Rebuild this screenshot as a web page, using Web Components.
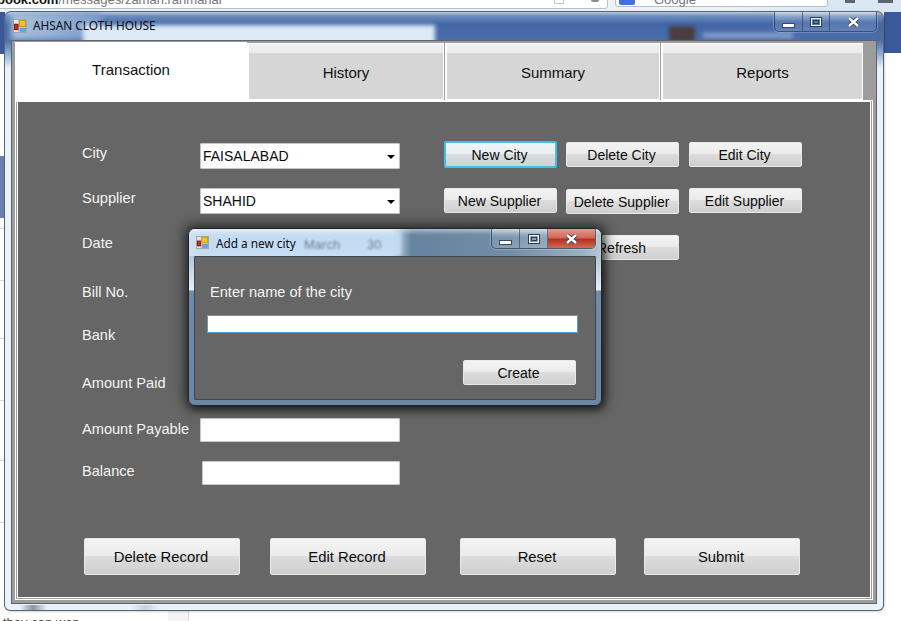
<!DOCTYPE html>
<html>
<head>
<meta charset="utf-8">
<title>AHSAN CLOTH HOUSE</title>
<style>
    html, body { margin: 0; height: 100%; overflow: hidden; background: #fff; }
    body { font-family: "Liberation Sans", Arial, sans-serif; }
    .big { width: 156px; height: 37px; font-size: 14.8px; }
</style>
</head>
<body>

<browser-backdrop></browser-backdrop>

<app-window caption="AHSAN CLOTH HOUSE">
    <tab-strip>
        <tab-item selected style="width:232px">Transaction</tab-item>
        <tab-item style="width:196px;margin-left:1px">History</tab-item>
        <tab-item style="width:214px">Summary</tab-item>
        <tab-item style="width:201px">Reports</tab-item>
    </tab-strip>
    <tab-page>
        <form-grid>
            <field-label style="margin-top:4px">City</field-label>
            <combo-box style="margin-top:2px">FAISALABAD</combo-box>
            <win-button focused style="height:27px">New City</win-button>
            <win-button style="margin-top:1px">Delete City</win-button>
            <win-button style="margin-top:1px">Edit City</win-button>

            <field-label style="margin-top:2px">Supplier</field-label>
            <combo-box>SHAHID</combo-box>
            <win-button>New Supplier</win-button>
            <win-button style="margin-top:1px">Delete Supplier</win-button>
            <win-button>Edit Supplier</win-button>

            <field-label>Date</field-label>
            <text-field></text-field>
            <win-button style="grid-column:4">Refresh</win-button>

            <field-label>Bill No.</field-label>
            <text-field></text-field>

            <field-label>Bank</field-label>
            <text-field></text-field>

            <field-label>Amount Paid</field-label>
            <text-field></text-field>

            <field-label style="margin-top:3px">Amount Payable</field-label>
            <text-field></text-field>

            <field-label style="margin-top:2px">Balance</field-label>
            <text-field style="margin-left:2px;width:198px"></text-field>

            <button-row>
                <win-button class="big">Delete Record</win-button>
                <win-button class="big" style="margin-left:30px">Edit Record</win-button>
                <win-button class="big" style="margin-left:34px">Reset</win-button>
                <win-button class="big" style="margin-left:28px">Submit</win-button>
            </button-row>
        </form-grid>
    </tab-page>
</app-window>

<city-dialog caption="Add a new city">
    <field-label>Enter name of the city</field-label>
    <text-field focused style="width:371px;height:18px;margin:15px 0 0 -3px"></text-field>
    <win-button style="margin:27px 0 0 253px">Create</win-button>
</city-dialog>

<script>
const appIcon = `
    <svg width="14" height="14" viewBox="0 0 14 14">
        <rect x="0.5" y="0.5" width="13" height="13" fill="#e3e6ea" stroke="#a2a2a2"/>
        <path d="M5.5 1V13M1 4.5H6M1 11H13" stroke="#bdbdbd"/>
        <rect x="6.5" y="1.5" width="6" height="6" fill="#f6c51d" stroke="#c9971a"/>
        <rect x="1.5" y="5.5" width="3.5" height="5" fill="#d3261c" stroke="#8f1a14"/>
        <rect x="7" y="9" width="5.5" height="3.5" fill="#6ea4e6" stroke="#4d82c8" stroke-width="0.6"/>
    </svg>`;

function capGlyph(kind){
    if(kind == "min") return `<svg width="13" height="5" viewBox="0 0 13 5"><rect x="0.5" y="0.5" width="12" height="4" fill="#fff" stroke="#3b4a60"/></svg>`;
    if(kind == "max") return `<svg width="12" height="10" viewBox="0 0 12 10"><rect x="1" y="1" width="10" height="8" fill="none" stroke="#2e3c52" stroke-width="2"/><rect x="1.5" y="1.5" width="9" height="7" fill="none" stroke="#f4f6f9"/><rect x="3.5" y="3.5" width="5" height="3" fill="none" stroke="#2e3c52"/></svg>`;
    return `<svg width="13" height="10" viewBox="0 0 13 10"><path d="M2 1 L11 9 M11 1 L2 9" stroke="#2e3c52" stroke-width="4"/><path d="M2 1 L11 9 M11 1 L2 9" stroke="#fff" stroke-width="2.4"/></svg>`;
}

class BrowserBackdrop extends HTMLElement{
    constructor(){
        super();
        this.attachShadow({mode: "open"});
        this.shadowRoot.innerHTML = `
            <style>
                :host { position: absolute; inset: 0; overflow: hidden; background: #fff; font-size: 13px; color: #333; }
                div { position: absolute; }
                .chrome { left: 0; right: 0; top: 0; height: 12px; background: linear-gradient(90deg, #eef3f8 0, #eef3f8 80%, #d9e7f4 92%); }
                .url { left: -4px; top: -7px; width: 610px; height: 14px; background: #fff; border: 1px solid #b5c0cc; border-radius: 3px; white-space: nowrap; line-height: 12px; color: #777; }
                .url b { color: #111; }
                .search { left: 615px; top: -7px; width: 213px; height: 14px; background: #fff; border: 1px solid #b5c0cc; border-radius: 3px; line-height: 12px; padding-left: 38px; box-sizing: border-box; color: #777; }
                .gbox { left: 619px; top: 0; width: 16px; height: 5px; background: #3f6fe0; border-radius: 0 0 2px 2px; }
                .star { left: 554px; top: 0; width: 10px; height: 4px; border: 1px solid #c8c8c8; border-top: 0; box-sizing: border-box; }
                .dot { left: 591px; top: 0; width: 8px; height: 2px; background: #8e8e8e; border-radius: 0 0 4px 4px; }
                .ic { top: 0; height: 3px; background: #5c6470; }
                .fb { left: 884px; right: 0; top: 12px; height: 41px; background: #3b5998; }
                .fbl { left: 0; width: 5px; top: 12px; height: 42px; background: #3b5998; }
                .side { left: 0; width: 5px; top: 156px; height: 62px; background: #6b7fae; }
                .line { left: 0; width: 5px; height: 1px; background: #d8d8d8; }
                .foot { left: 3px; top: 615px; font-size: 13px; white-space: nowrap; line-height: 15px; color: #444; }
                .fcol { left: 168px; width: 20px; top: 611px; height: 10px; background: #f3f3f3; border-right: 1px solid #dcdcdc; }
            </style>
            <div class="chrome"></div>
            <div class="url"><b>book.com</b>/messages/zaman.rahmanal</div>
            <div class="search">Google</div>
            <div class="gbox"></div>
            <div class="star"></div>
            <div class="dot"></div>
            <div class="ic" style="left:845px;width:10px"></div>
            <div class="ic" style="left:878px;width:15px"></div>
            <div class="fb"></div>
            <div class="fbl"></div>
            <div class="side"></div>
            <div class="line" style="top:228px"></div>
            <div class="line" style="top:280px"></div>
            <div class="line" style="top:338px"></div>
            <div class="line" style="top:400px"></div>
            <div class="line" style="top:460px"></div>
            <div class="line" style="top:522px"></div>
            <div class="foot">they can wan</div>
            <div class="fcol"></div>
        `;
    }
}
customElements.define("browser-backdrop", BrowserBackdrop);

class CaptionControls extends HTMLElement{
    constructor(){
        super();
        this.attachShadow({mode: "open"});
        const w = (this.getAttribute("widths") || "28,27,46").split(",");
        this.shadowRoot.innerHTML = `
            <style>
                :host { display: flex; margin-left: auto; height: 19px; border: 1px solid rgba(40,55,80,.75); border-top: 0; border-radius: 0 0 5px 5px; box-shadow: 0 0 0 1px rgba(255,255,255,.22); overflow: hidden; background: linear-gradient(rgba(255,255,255,.34), rgba(255,255,255,.08) 50%, rgba(255,255,255,.16)); }
                span { display: flex; align-items: center; justify-content: center; box-sizing: border-box; border-right: 1px solid rgba(40,55,80,.55); }
                span:last-child { border-right: 0; }
                .min svg { margin-top: 8px; }
                :host([danger]) .cls { background: linear-gradient(#e39a8e, #d0695b 45%, #b5321f 55%, #cf6a55); }
            </style>
            <span class="min" style="width:${w[0]}px">${capGlyph("min")}</span>
            <span style="width:${w[1]}px">${capGlyph("max")}</span>
            <span class="cls" style="width:${w[2]}px">${capGlyph("x")}</span>
        `;
    }
}
customElements.define("caption-controls", CaptionControls);

class AppWindow extends HTMLElement{
    constructor(){
        super();
        this.attachShadow({mode: "open"});
        this.shadowRoot.innerHTML = `
            <style>
                :host { position: absolute; left: 5px; top: 12px; width: 878px; height: 598px; box-sizing: border-box; padding: 0 6px 6px; display: flex; flex-direction: column; border-radius: 6px 6px 5px 5px;
                    background:
                        linear-gradient(90deg, transparent 15px, #8b95a2 28px, transparent 42px, transparent 125px, #c9d2dc 140px, transparent 155px) 0 100% / 100% 5px no-repeat,
                        linear-gradient(#4a6dab 28px, #8fb0d6 42px, rgba(255,255,255,0) 56px),
                        #e9f1f9;
                    box-shadow: 0 0 0 1px #5d6470, 1px 1px 3px rgba(0,0,0,.35); }
                .bar { position: relative; height: 28px; margin: 0 -6px; padding-right: 6px; display: flex; align-items: flex-start; overflow: hidden; border-radius: 6px 6px 0 0; font: 11.8px "Noto Sans", sans-serif; color: #0b0b0b; background: linear-gradient(#b9cbe0 0, #6d8dbc 4px, #4468a7 12px, #4a6dab 100%); }
                .pale { position: absolute; left: 78px; top: 13px; width: 352px; height: 24px; background: #dce9f6; filter: blur(2px); }
                .palel { position: absolute; left: 6px; top: 0; width: 90px; height: 28px; background: linear-gradient(90deg, #a9c2de, #7d9ccb); filter: blur(3px); }
                .smudge { position: absolute; left: 664px; top: 14px; width: 26px; height: 16px; background: #4a3d40; filter: blur(2px); }
                .smudge2 { position: absolute; left: 698px; top: 21px; width: 90px; height: 5px; background: #8aa4cf; filter: blur(2px); }
                svg.ico { position: relative; margin: 7px 0 0 8px; }
                .t { position: relative; margin: 5px 0 0 6px; white-space: nowrap; }
                .client { flex: 1; display: flex; flex-direction: column; box-sizing: border-box; border: 1px solid #5d6470; background: #9c9c9c; padding: 1px 3px 3px 3px; min-height: 0; }
            </style>
            <div class="bar">
                <div class="palel"></div><div class="pale"></div><div class="smudge"></div><div class="smudge2"></div>
                ${appIcon.replace("<svg", '<svg class="ico"')}
                <span class="t">${this.getAttribute("caption")}</span>
                <caption-controls style="position:relative"></caption-controls>
            </div>
            <div class="client"><slot></slot></div>
        `;
    }
}
customElements.define("app-window", AppWindow);

class TabStrip extends HTMLElement{
    constructor(){
        super();
        this.attachShadow({mode: "open"});
        this.shadowRoot.innerHTML = `
            <style>
                :host { display: flex; height: 58px; align-items: flex-end; position: relative; z-index: 1; }
            </style>
            <slot></slot>
        `;
    }
}
customElements.define("tab-strip", TabStrip);

class TabItem extends HTMLElement{
    constructor(){
        super();
        this.attachShadow({mode: "open"});
        this.shadowRoot.innerHTML = `
            <style>
                :host { display: flex; box-sizing: border-box; height: 57px; margin-left: 2px; align-items: center; justify-content: center; font-size: 15px; color: #111; background: linear-gradient(#f1f1f1, #ececec 10px, #d6d6d6 10px); box-shadow: 0 0 0 1px #fff inset, -1px 0 0 #fff; padding-top: 1px; }
                :host([selected]) { height: 60px; margin: 0 0 -2px; background: #fff; box-shadow: none; padding: 0 0 5px; }
            </style>
            <slot></slot>
        `;
    }
}
customElements.define("tab-item", TabItem);

class TabPage extends HTMLElement{
    constructor(){
        super();
        this.attachShadow({mode: "open"});
        this.shadowRoot.innerHTML = `
            <style>
                :host { display: block; flex: 1; width: 858px; box-sizing: border-box; border: 3px double #fff; border-top: 2px solid #fff; background: #666; background-clip: padding-box; }
            </style>
            <slot></slot>
        `;
    }
}
customElements.define("tab-page", TabPage);

class FormGrid extends HTMLElement{
    constructor(){
        super();
        this.attachShadow({mode: "open"});
        this.shadowRoot.innerHTML = `
            <style>
                :host { display: grid; padding: 39px 0 0 64px; grid-template-columns: 118px 244px 122px 123px 113px; grid-template-rows: 47px 47px 49px 43px 48px 43px 43px 77px auto; align-items: start; }
            </style>
            <slot></slot>
        `;
    }
}
customElements.define("form-grid", FormGrid);

class ButtonRow extends HTMLElement{
    constructor(){
        super();
        this.attachShadow({mode: "open"});
        this.shadowRoot.innerHTML = `
            <style>
                :host { display: flex; grid-column: 1 / -1; margin-left: 2px; }
            </style>
            <slot></slot>
        `;
    }
}
customElements.define("button-row", ButtonRow);

class FieldLabel extends HTMLElement{
    constructor(){
        super();
        this.attachShadow({mode: "open"});
        this.shadowRoot.innerHTML = `
            <style>
                :host { display: block; grid-column: 1; font-size: 14.6px; line-height: 16px; color: #f4f4f4; white-space: nowrap; }
            </style>
            <slot></slot>
        `;
    }
}
customElements.define("field-label", FieldLabel);

class ComboBox extends HTMLElement{
    constructor(){
        super();
        this.attachShadow({mode: "open"});
        this.shadowRoot.innerHTML = `
            <style>
                :host { display: flex; align-items: center; box-sizing: border-box; width: 200px; height: 26px; padding: 0 5px 0 3px; font-size: 14px; color: #0c0c0c; background: #fff; border-radius: 2px; box-shadow: 0 0 0 1px #c4c4c4 inset; }
                i { margin-left: auto; width: 0; height: 0; border: 4px solid transparent; border-top-color: #000; border-bottom: 0; margin-top: 1px; }
            </style>
            <slot></slot><i></i>
        `;
    }
}
customElements.define("combo-box", ComboBox);

class TextField extends HTMLElement{
    constructor(){
        super();
        this.attachShadow({mode: "open"});
        this.shadowRoot.innerHTML = `
            <style>
                :host { display: block; box-sizing: border-box; width: 200px; height: 24px; background: #fff; border-radius: 2px; box-shadow: 0 0 0 1px #c8c8c8 inset; }
                :host([focused]) { box-shadow: 0 0 0 1px #5f9ac9 inset; border-radius: 1px; }
            </style>
        `;
    }
}
customElements.define("text-field", TextField);

class WinButton extends HTMLElement{
    constructor(){
        super();
        this.attachShadow({mode: "open"});
        this.shadowRoot.innerHTML = `
            <style>
                :host { display: flex; align-items: center; justify-content: center; box-sizing: border-box; width: 113px; height: 25px; padding-right: 2px; font-size: 14px; color: #0c0c0c; border: 1px solid #e9e9e9; border-radius: 2px; background: linear-gradient(#f3f3f3, #ebebeb 48%, #dcdcdc 50%, #cfcfcf); white-space: nowrap; }
                :host([focused]) { border: 2px solid #3fc0e6; background: linear-gradient(#f1f6f9, #e8eef1 48%, #d9dee1 50%, #ccd2d5); }
            </style>
            <slot></slot>
        `;
    }
}
customElements.define("win-button", WinButton);

class CityDialog extends HTMLElement{
    constructor(){
        super();
        this.attachShadow({mode: "open"});
        this.shadowRoot.innerHTML = `
            <style>
                :host { position: absolute; left: 188px; top: 228px; width: 414px; height: 178px; box-sizing: border-box; padding: 0 5px 5px; display: flex; flex-direction: column; border-radius: 7px; border: 1px solid #20262e; background: linear-gradient(#b3c7d8 0, #b3c7d8 28px, #e9eff4 61px, #6f8ba8 62px, #6a87a4 100%); box-shadow: 0 0 12px 4px rgba(0,0,0,.55), 2px 3px 6px rgba(0,0,0,.4); }
                .bar { position: relative; height: 27px; margin: 0 -5px; padding-right: 5px; display: flex; align-items: flex-start; overflow: hidden; border-radius: 6px 6px 0 0; font: 11.8px "Noto Sans", sans-serif; color: #0b0b0b; background: linear-gradient(90deg, #cfe0f0 0, #cfe0f0 49%, #66839f 54%, #728da6 78%, #9db2c3 96%, #b9c9d6 100%); }
                .pale { position: absolute; left: 8px; top: 3px; width: 204px; height: 24px; background: #c4dcf3; filter: blur(2px); }
                .sheen { position: absolute; left: 0; right: 0; top: 0; height: 6px; background: linear-gradient(rgba(255,255,255,.45), rgba(255,255,255,0)); }
                .blur { position: absolute; left: 115px; top: 8px; font: 13px "Liberation Sans", sans-serif; color: #6c7f93; filter: blur(1.3px); }
                .num { position: absolute; left: 178px; top: 8px; font: 13px "Liberation Sans", sans-serif; color: #6c7f93; filter: blur(1.3px); }
                svg.ico { position: relative; margin: 7px 0 0 7px; width: 13px; height: 13px; }
                .t { position: relative; margin: 6px 0 0 7px; white-space: nowrap; }
                .client { flex: 1; box-sizing: border-box; border: 1px solid #3b4654; border-radius: 1px; background: #666; padding: 27px 0 0 15px; }
            </style>
            <div class="bar">
                <div class="pale"></div><div class="sheen"></div>
                <span class="blur">March</span><span class="num">30</span>
                ${appIcon.replace("<svg", '<svg class="ico"')}
                <span class="t">${this.getAttribute("caption")}</span>
                <caption-controls danger widths="28,28,47" style="position:relative"></caption-controls>
            </div>
            <div class="client"><slot></slot></div>
        `;
    }
}
customElements.define("city-dialog", CityDialog);
</script>
</body>
</html>
